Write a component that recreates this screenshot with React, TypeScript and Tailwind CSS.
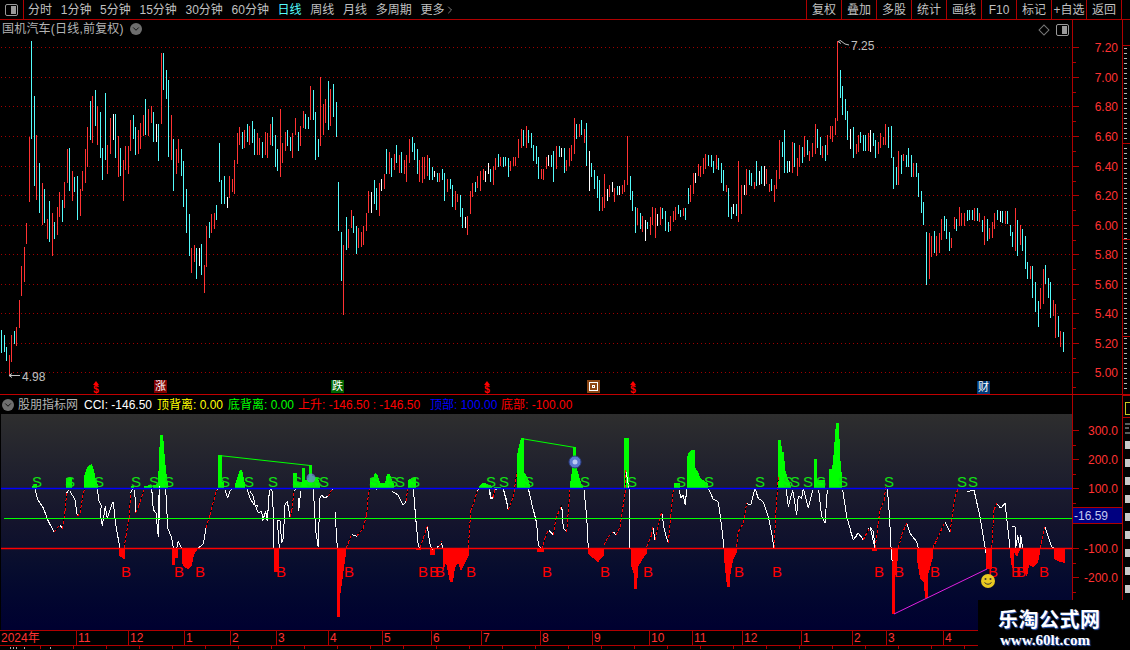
import { ChevronDown, ChevronRight } from "lucide-react";

type Pt = [number, number, number?];

const fontStack = "font-['Liberation_Sans','Noto_Sans_CJK_SC',sans-serif]";

// bars were read off 3x crops: "x top bottom colour", in crop coordinates
const barCrops: { ox: number; rows: string }[] = [
  {
    ox: 0,
    rows: "3 870 938 c,12 885 935 c,18 920 962 c,28 945 1005 r,33 885 965 r,42 873 912 c,48 862 917 r,57 780 863 r,64 678 767 r,72 621 725 r,79 549 611 r,87 290 485 r,94 3 298 c,102 168 437 c,109 286 479 r,117 369 518 c,126 429 554 r,132 447 548 c,141 537 597 r,147 484 605 c,156 519 647 r,163 546 597 c,171 501 585 r,178 457 530 r,186 480 545 c,193 426 503 r,201 327 428 r,207 324 452 c,216 393 483 r,222 411 456 c,232 408 539 c,240 447 527 r,247 393 452 r,255 327 429 r,262 261 380 r,270 183 300 c,277 168 308 r,285 150 258 c,292 198 315 r,301 216 354 c,307 324 419 c,315 159 360 c,322 315 401 r,331 234 341 r,339 222 300 w,346 222 354 c,354 288 410 r,361 323 408 c,370 360 482 r,376 318 390 r,385 318 401 r,391 239 333 r,400 225 297 c,406 261 344 c,415 270 342 r,421 249 327 r,430 225 289 r,435 177 285 c,444 207 288 r,453 198 249 r,460 216 306 c,468 252 306 w,475 252 362 c,484 39 252 r,490 39 150 c,499 90 177 c,505 120 351 c,514 225 360 r,520 297 452 c,529 327 402 r,535 297 369 r,544 327 408 c,550 363 500 c,558 447 578 c,568 522 647 c,574 624 698 r,583 615 666 r,589 624 716 c,598 624 678 w,604 612 704 c,613 675 758 r,619 558 680 r,628 546 593 c,634 522 578 r,643 519 567 r,649 495 540 c,658 309 425 c,664 420 491 c,673 408 493 c,682 471 503 w,688 408 474 r,697 417 455 r,703 360 461 r,712 279 372 r,718 261 315 r,727 276 327 c,733 270 324 r,742 252 306 c,748 258 315 r,757 243 309 c,763 267 345 c,772 279 345 r,778 294 345 r,787 306 354 c,796 276 345 r,802 279 354 r,811 252 315 r,817 231 318 c,826 285 381 c,832 327 393 c,841 207 411 r,847 309 369 r,856 276 333 r,862 270 318 c,871 291 333 c,877 279 354 r,886 234 285 r,895 276 333 c,901 258 318 r,910 213 264 r,916 222 267 c,925 231 267 c,931 138 240 r,940 150 240 c,946 216 360 c,955 297 351 c,961 111 318 r,970 192 285 r,976 177 249 r,985 123 270 c,991 147 259 r,1000 132 231 c,1009 186 291 c,1015 426 573 c,1024 576 723 c,1030 615 825 r,1039 531 630 c,1045 567 625 r",
  },
  {
    ox: 350,
    rows: "3 510 564 r,9 528 579 c,18 558 641 c,24 564 624 r,33 576 621 r,39 558 615 r,48 519 573 r,54 453 519 r,63 456 519 w,72 420 492 c,78 444 510 c,87 429 528 r,94 417 453 w,102 402 447 r,109 327 402 c,117 336 402 r,124 354 411 c,132 342 390 r,138 315 369 c,147 345 399 r,153 336 399 c,162 360 402 r,168 345 426 r,178 297 369 r,186 291 336 c,192 309 360 c,201 327 402 c,207 360 426 r,216 351 429 r,222 351 417 r,231 345 408 r,237 354 420 c,246 381 420 c,252 393 411 w,261 399 426 c,267 399 426 r,276 387 420 c,282 399 483 c,291 417 456 r,300 417 447 c,306 435 501 c,315 453 510 r,321 462 486 r,330 465 531 c,336 504 564 c,345 531 564 w,351 528 585 r,360 453 522 r,366 429 471 r,375 426 456 c,381 408 444 r,390 393 453 r,399 387 420 r,405 393 426 w,414 369 402 w,420 387 426 c,429 378 435 r,435 354 390 r,444 342 381 c,450 351 378 r,459 351 381 c,465 351 378 c,474 354 411 c,480 363 393 r,489 351 378 r,495 351 378 r,504 297 354 r,513 267 324 r,519 270 318 c,528 258 324 r,534 270 309 c,543 279 324 c,549 315 363 c,558 318 372 c,564 351 417 c,573 387 417 r,579 387 420 r,588 351 387 r,594 345 378 w,603 345 381 c,609 333 426 c,618 318 387 r,627 318 351 c,633 324 351 w,642 324 399 c,648 360 393 r,657 324 378 r,663 315 363 r,672 234 342 r,678 252 297 c,687 252 291 r,693 240 285 c,702 267 309 r,708 249 378 c,717 333 453 w,723 369 411 c,732 390 447 c,741 408 474 c,747 420 513 c,756 471 513 r,762 402 504 r,771 447 483 w,777 435 471 r,786 426 456 w,792 444 486 r,801 438 465 c,807 438 465 w,816 435 462 r,822 420 456 r,831 288 435 r,840 408 480 c,846 453 513 c,855 501 579 c,861 504 555 r,870 519 567 c,876 528 576 r,885 540 603 w,891 546 567 c,900 531 585 r,906 501 555 r,915 504 594 r,921 522 558 w,930 501 555 r,936 504 537 c,945 513 573 c,954 546 576 c,960 528 573 r,969 513 546 r,975 501 540 r,984 495 522 c,990 510 531 c,999 504 528 r,1005 504 540 c,1014 444 492 c,1020 435 486 r,1029 399 462 r,1035 399 429 w,1044 372 408 r",
  },
  {
    ox: 700,
    rows: "2 378 411 r,10 354 402 r,17 342 387 r,25 345 378 c,33 345 381 c,40 363 399 c,48 345 387 r,54 354 390 c,63 369 429 c,70 390 453 c,78 435 456 r,85 444 531 c,93 501 537 c,100 492 522 w,108 492 528 c,115 363 545 r,123 435 522 r,132 435 465 w,138 387 465 r,147 390 435 c,153 399 438 c,162 426 447 r,168 363 438 c,177 393 435 w,185 378 432 c,192 378 438 w,198 387 432 r,208 432 456 r,214 417 453 c,222 435 486 r,229 390 447 r,237 300 417 r,246 306 351 c,252 270 399 c,262 363 399 c,268 363 396 w,277 306 399 r,283 309 381 c,292 354 408 r,298 315 381 r,307 321 369 c,313 288 351 r,322 300 345 c,328 333 363 r,337 309 351 r,346 252 342 r,352 267 324 c,361 291 345 c,367 318 354 r,376 315 363 c,382 285 345 r,391 258 297 r,397 258 306 r,406 234 285 r,412 3 243 r,421 90 174 c,427 138 225 c,436 177 240 c,442 213 300 c,451 267 327 w,460 261 354 c,469 312 342 r,474 285 336 r,481 276 309 c,490 285 333 c,496 285 333 c,505 279 333 r,511 270 336 w,520 279 318 c,526 300 354 c,535 306 342 r,541 279 324 r,550 291 315 r,556 252 315 r,565 261 324 c,574 258 354 c,580 351 447 c,589 381 435 c,595 333 435 r,604 345 402 c,610 342 363 r,619 345 381 c,625 324 381 c,634 345 411 c,640 369 411 r,649 369 411 c,655 399 471 c,664 453 519 c,670 486 555 c,679 576 735 c,688 579 717 r,694 588 651 r,703 573 639 c,709 588 648 r,718 579 639 r,724 537 600 r,733 528 573 c,739 537 597 c,748 576 633 c,754 594 624 r,763 531 567 r,769 537 573 c,778 501 558 r,784 519 558 r,793 519 558 r,802 510 543 c,808 510 540 c,817 510 540 c,823 504 543 r,832 504 543 c,838 519 546 r,847 540 576 c,853 528 615 r,862 537 603 c,868 564 597 r,877 546 594 r,883 519 567 r,892 510 540 c,901 513 546 w,907 513 549 c,916 513 552 r,922 513 552 c,931 555 588 c,937 576 621 c,946 504 633 r,952 540 648 c,961 555 615 r,967 567 633 c,976 588 687 c,982 666 717 c,991 678 717 r,997 678 774 c,1006 726 816 c,1015 783 861 c,1021 744 807 r,1030 687 792 r,1036 675 732 c,1045 714 774 c,1051 726 834 c,1060 780 828 r,1066 792 894 r,1075 828 891 c,1081 873 921 r,1090 876 936 c",
  },
];

function barPaths() {
  const out: Record<string, string> = { r: "", c: "", w: "" };
  barCrops.forEach((crop) => {
    crop.rows.split(",").forEach((row) => {
      const [x, top, bottom, colour] = row.split(" ");
      const px = Math.floor(crop.ox + Number(x) / 3) + 0.5;
      const y1 = Math.round(40 + Number(top) / 3);
      const y2 = Math.round(40 + Number(bottom) / 3);
      out[colour] += `M${px} ${y1}V${y2}`;
    });
  });
  return out;
}

const gridYs = [47, 77, 106, 136, 166, 195, 225, 254, 284, 313, 343, 372];
const priceLabels = ["7.20", "7.00", "6.80", "6.60", "6.40", "6.20", "6.00", "5.80", "5.60", "5.40", "5.20", "5.00"];

// green and red humps of the CCI pane, as page coordinates of their outline
const greenAreas: Pt[][] = [
  [[32, 486], [35, 484], [37, 484]],
  [[66, 478], [72, 478]],
  [[84, 477], [87, 468], [89, 465], [92, 464], [94, 470], [96, 480], [98, 485]],
  [[131, 486], [134, 486]],
  [[144, 486], [152, 485]],
  [[153, 485], [158, 484], [160, 435], [163, 435], [165, 460], [166, 470], [168, 485]],
  [[218, 455], [222, 455], [222, 482], [224, 482]],
  [[235, 484], [238, 476], [240, 470], [242, 470], [245, 484]],
  [[293, 473], [297, 473], [297, 482], [302, 482], [302, 468], [305, 468], [305, 480], [309, 480], [309, 465], [312, 465], [312, 476], [318, 478], [320, 486]],
  [[370, 478], [373, 478], [375, 473], [378, 476], [380, 483], [385, 483], [387, 474], [390, 474], [392, 480], [394, 484]],
  [[408, 480], [412, 478], [416, 478]],
  [[479, 486], [482, 483], [485, 483], [489, 485], [492, 486]],
  [[494, 487], [501, 487]],
  [[517, 455], [519, 446], [521, 438], [524, 438], [524, 472], [528, 478], [530, 486]],
  [[570, 485], [572, 470], [573, 447], [576, 447], [576, 467], [578, 472], [580, 480], [583, 487]],
  [[624, 438], [629, 438]],
  [[674, 483], [680, 483]],
  [[687, 457], [689, 452], [692, 450], [695, 450], [695, 467], [698, 472], [701, 479], [708, 483]],
  [[778, 440], [781, 440], [782, 452], [784, 452], [785, 470], [788, 478], [791, 487]],
  [[814, 459], [817, 459], [817, 480], [825, 480]],
  [[829, 469], [832, 469], [833, 462], [836, 423], [839, 423], [840, 455], [842, 477]],
];

const redAreas: Pt[][] = [
  [[119, 556], [121, 557], [123, 559], [125, 559]],
  [[172, 565], [175, 565], [175, 558], [178, 558]],
  [[182, 563], [185, 568], [188, 569], [192, 565], [194, 555], [197, 550]],
  [[274, 572], [279, 572]],
  [[337, 617], [340, 617], [340, 597], [343, 575], [346, 553]],
  [[416, 550], [421, 550]],
  [[430, 555], [435, 555]],
  [[443, 572], [446, 563], [450, 582], [453, 582], [455, 568], [458, 563], [461, 571], [465, 563], [469, 555]],
  [[537, 552], [544, 552]],
  [[588, 554], [593, 558], [598, 563], [601, 558], [604, 556]],
  [[631, 565], [634, 575], [634, 589], [637, 589], [638, 567], [642, 560], [647, 553]],
  [[724, 558], [727, 587], [730, 587], [730, 577], [733, 560], [737, 552]],
  [[872, 551], [877, 551]],
  [[892, 614], [895, 614], [895, 577], [897, 570], [898, 553]],
  [[917, 560], [920, 578], [924, 583], [925, 598], [928, 598], [928, 575], [933, 557]],
  [[986, 569], [992, 569]],
  [[1010, 555], [1012, 568], [1014, 568], [1014, 552], [1017, 557], [1020, 550]],
  [[1023, 570], [1027, 577], [1029, 565], [1033, 567], [1038, 563], [1040, 552]],
  [[1054, 559], [1060, 562], [1065, 563]],
];

// CCI trace, each chunk in crop coordinates; a third value marks a rising, dashed leg
const cciCrops: { ox: number; oy: number; chunks: Pt[][] }[] = [
  {
    ox: 0,
    oy: 478,
    chunks: [
      [[105, 31], [112, 62], [130, 90], [145, 130], [163, 163], [180, 140, 1], [187, 152], [195, 100, 1], [200, 45, 1], [207, 35]],
      [[210, 40], [225, 65], [232, 115], [240, 105, 1], [250, 45, 1], [255, 31, 1]],
      [[292, 31], [297, 70], [305, 85], [300, 100], [307, 143], [316, 85], [322, 122], [335, 80], [340, 72], [347, 140], [357, 195], [360, 210]],
      [[372, 210], [378, 175, 1], [387, 120, 1], [392, 45, 1], [398, 31]],
      [[404, 35], [407, 105], [416, 85, 1], [432, 35, 1]],
      [[455, 31], [460, 95], [468, 105], [475, 178], [475, 120], [478, 25]],
      [[478, 25], [478, 125]],
      [[497, 31], [503, 150], [515, 180], [520, 210]],
      [[530, 210], [535, 190], [545, 210]],
      [[595, 210], [610, 198], [618, 150], [630, 110, 1], [650, 35, 1], [655, 31]],
      [[675, 35], [683, 60], [690, 38], [700, 31]],
      [[740, 31], [750, 60], [762, 80], [775, 85]],
    ],
  },
  {
    ox: 250,
    oy: 478,
    chunks: [
      [[0, 40], [10, 55], [15, 80], [25, 105], [35, 100], [38, 128], [47, 100], [52, 130], [58, 40], [62, 31], [68, 45], [72, 210]],
      [[88, 210], [82, 128], [90, 128], [95, 195], [100, 180], [105, 80], [112, 70], [120, 118], [125, 100, 1], [132, 40, 1], [138, 31]],
      [[145, 60], [146, 98], [152, 40]],
      [[190, 31], [197, 160], [205, 208], [208, 100], [210, 60], [215, 50], [222, 60], [235, 55], [245, 35, 1], [250, 31]],
      [[255, 100], [262, 210]],
      [[288, 210], [295, 195, 1], [305, 170, 1], [320, 175], [340, 150, 1], [350, 110, 1], [355, 50, 1], [360, 31, 1]],
      [[380, 36], [380, 31]],
      [[425, 40], [443, 50], [460, 82], [468, 70], [473, 31, 1]],
      [[490, 31], [497, 120], [505, 205], [510, 210], [520, 180, 1], [532, 145, 1], [537, 180], [542, 208], [550, 215]],
      [[560, 208], [568, 205], [575, 190, 1], [577, 210]],
      [[655, 210], [662, 100, 1], [672, 72, 1], [682, 38, 1], [690, 31]],
      [[717, 35], [722, 62], [730, 60], [735, 35, 1]],
      [[760, 31], [775, 95]],
    ],
  },
  {
    ox: 480,
    oy: 410,
    chunks: [
      [[28, 235], [33, 265], [38, 260], [45, 238, 1], [68, 235], [78, 265], [85, 300], [100, 260, 1], [110, 190, 1]],
      [[145, 235], [155, 280], [170, 340], [175, 405], [185, 418], [195, 385, 1], [205, 360, 1], [220, 375], [228, 325, 1], [245, 285, 1], [250, 355], [260, 365], [270, 240, 1]],
      [[312, 240], [320, 320], [325, 415]],
      [[372, 405], [385, 380, 1], [400, 365, 1], [408, 375], [420, 350, 1], [435, 250, 1], [437, 180, 1], [447, 235], [450, 415]],
      [[500, 410], [515, 375, 1], [518, 350, 1], [525, 390], [545, 305, 1], [553, 360], [565, 400], [572, 320, 1], [580, 240, 1]],
      [[598, 240], [602, 265], [610, 255], [616, 285], [620, 235]],
      [[685, 235], [700, 268], [715, 275], [725, 350], [732, 415]],
      [[770, 410], [775, 365, 1], [790, 340, 1], [800, 280, 1], [812, 285], [825, 235], [835, 265], [850, 275], [865, 320], [875, 370], [882, 415], [888, 300, 1], [895, 200, 1]],
      [[918, 235], [925, 290], [938, 240], [950, 315], [955, 258], [965, 265], [970, 235], [985, 295], [998, 240]],
      [[1016, 240], [1025, 320], [1035, 340], [1042, 240]],
      [[1088, 240], [1100, 320], [1120, 390], [1135, 368], [1150, 390], [1170, 350, 1], [1180, 365], [1185, 410]],
    ],
  },
  {
    ox: 850,
    oy: 480,
    chunks: [
      [[0, 150], [10, 180], [25, 160], [40, 178], [60, 140], [75, 205], [90, 90, 1], [103, 60, 1], [107, 20, 1]],
      [[112, 25], [118, 100], [125, 240], [130, 240]],
      [[145, 205], [155, 165, 1], [170, 130, 1], [180, 160], [200, 185], [205, 205]],
      [[248, 205], [260, 180, 1], [285, 125, 1], [300, 155], [315, 50, 1], [325, 25, 1]],
      [[350, 35], [372, 30], [390, 110], [405, 200], [408, 220]],
      [[425, 205], [432, 90, 1], [440, 70, 1], [452, 85], [465, 70], [472, 130], [480, 205]],
      [[487, 140], [495, 140], [497, 205], [503, 165], [510, 205], [512, 165], [518, 205]],
      [[570, 205], [585, 140, 1], [605, 200], [612, 205]],
    ],
  },
];

function cciPaths() {
  let white = "";
  let rising = "";
  cciCrops.forEach(({ ox, oy, chunks }) => {
    chunks.forEach((chunk) => {
      chunk.forEach((p, i) => {
        if (i === 0) return;
        const a = chunk[i - 1];
        const leg = `M${(ox + a[0] / 3).toFixed(1)} ${(oy + a[1] / 3).toFixed(1)}L${(ox + p[0] / 3).toFixed(1)} ${(oy + p[1] / 3).toFixed(1)}`;
        if (p[2]) rising += leg;
        else white += leg;
      });
    });
  });
  return { white, rising };
}

const areaPath = (pts: Pt[], base: number) =>
  `M${pts[0][0]} ${base}` + pts.map((p) => `L${p[0]} ${p[1]}`).join("") + `L${pts[pts.length - 1][0]} ${base}Z`;

const sXs = [37, 70, 99, 136, 154, 169, 225, 249, 273, 297, 311, 316, 324, 374, 393, 400, 415, 491, 504, 529, 585, 632, 681, 709, 760, 788, 795, 808, 821, 843, 889, 962, 973];
const bXs = [126, 179, 200, 281, 349, 423, 434, 440, 471, 547, 605, 648, 739, 777, 879, 899, 935, 993, 1016, 1021, 1044];

const tabs = ["分时", "1分钟", "5分钟", "15分钟", "30分钟", "60分钟", "日线", "周线", "月线", "多周期"];
const tools = ["复权", "叠加", "多股", "统计", "画线", "F10", "标记", "+自选", "返回"];

const months: [string, number][] = [
  ["2024年", 77], ["11", 52], ["12", 56], ["1", 46], ["2", 46], ["3", 52], ["4", 54], ["5", 49], ["6", 50],
  ["7", 59], ["8", 52], ["9", 57], ["10", 43], ["11", 50], ["12", 59], ["1", 51], ["2", 34], ["3", 57], ["4", 90],
];

function PanelIcon() {
  return (
    <span className="flex h-[12px] w-[13px] justify-end rounded-[2px] border border-[#9a9a9a] p-[1px]">
      <span className="h-full w-[5px] bg-[#9a9a9a]" />
    </span>
  );
}

function RoundToggle() {
  return (
    <span className="flex h-[12px] w-[12px] items-center justify-center rounded-full bg-[#6e6e6e] text-black">
      <ChevronDown size={10} strokeWidth={2} />
    </span>
  );
}

function PriceChart() {
  const bars = barPaths();
  return (
    <svg className="block" width={1072} height={374} viewBox="0 20 1072 374">
      {gridYs.map((y) => (
        <line key={y} x1={1} x2={1072} y1={y + 0.5} y2={y + 0.5} stroke="#a00000" strokeDasharray="1 3" />
      ))}
      <g shapeRendering="crispEdges" fill="none">
        <path d={bars.r} stroke="#ff3232" />
        <path d={bars.c} stroke="#54fcfc" />
        <path d={bars.w} stroke="#ffffff" />
      </g>
      {/* extreme price flags */}
      <g fill="none" stroke="#c0c0c0">
        <path d="M9 375.5H20M9 375.5l3-2M9 375.5l3 2" />
        <path d="M838 41.5l3-1M838 41.5l3 2M841 41l4 3 4 1" />
      </g>
      <g fill="#c0c0c0" fontSize={12}>
        <text x={22} y={381}>4.98</text>
        <text x={851} y={50}>7.25</text>
      </g>
      {/* $ signals */}
      {[96, 487, 633].map((x) => (
        <g key={x} fill="#ff0000">
          <path d={`M${x - 3} 385L${x} 381L${x + 3} 385Z`} />
          <text x={x} y={393} fontSize={10} fontWeight={700} textAnchor="middle">$</text>
        </g>
      ))}
    </svg>
  );
}

function SignalBox({ text, colour }: { text: string; colour: string }) {
  return (
    <span className={`flex h-[13px] w-[13px] items-center justify-center text-[11px] leading-none text-white ${colour}`}>{text}</span>
  );
}

function CciChart() {
  const { white, rising } = cciPaths();
  return (
    <svg className="block" width={1071} height={216} viewBox="1 414 1071 216">
      <g shapeRendering="crispEdges">
        {greenAreas.map((a, i) => (
          <path key={i} d={areaPath(a, 488)} fill="#00ff00" />
        ))}
        {redAreas.map((a, i) => (
          <path key={i} d={areaPath(a, 549)} fill="#ff0000" />
        ))}
      </g>
      <g shapeRendering="crispEdges">
        <path d={white} fill="none" stroke="#ffffff" />
        <path d={rising} fill="none" stroke="#000000" />
        <path d={rising} fill="none" stroke="#ff0000" strokeDasharray="3 2" />
      </g>
      <path d="M1 488.5H1072" stroke="#0000ff" strokeWidth={1.4} />
      <path d="M4 518.5H1072" stroke="#00ff00" strokeWidth={1.2} />
      <path d="M1 548.5H1072" stroke="#ff0000" strokeWidth={1.4} />
      <path d="M219 455.5L310 465.5M521 438.5L575 447.5" stroke="#00ff00" fill="none" />
      <path d="M894 614L987 569" stroke="#e020e0" fill="none" />
      <g fontSize={15} fill="#12e012" textAnchor="middle">
        {sXs.map((x) => (
          <text key={x} x={x} y={487}>S</text>
        ))}
      </g>
      <g fontSize={15} fill="#ff0000" textAnchor="middle">
        {bXs.map((x) => (
          <text key={x} x={x} y={577}>B</text>
        ))}
      </g>
      {/* alert balls */}
      <circle cx={311} cy={478} r={4.5} fill="#6f86d8" opacity={0.75} />
      <circle cx={575} cy={462} r={6} fill="#5d78d0" stroke="#2c3f86" />
      <circle cx={575} cy={462} r={2.5} fill="#b9c8f2" />
      {/* smiley */}
      <circle cx={988} cy={581} r={7} fill="#e8c820" />
      <circle cx={985.5} cy={579} r={1} fill="#333" />
      <circle cx={990.5} cy={579} r={1} fill="#333" />
      <path d="M984.5 582.5q3.5 3.5 7 0" fill="none" stroke="#333" />
    </svg>
  );
}

function PriceAxis() {
  return (
    <svg className="block" width={50} height={374} viewBox="1073 20 50 374">
      {gridYs.map((y, i) => (
        <g key={y}>
          <path d={`M1073 ${y + 0.5}H1079`} stroke="#b00000" />
          <path d={`M1073 ${y + 15.5}H1076`} stroke="#b00000" />
          <text x={1118} y={y + 5} fontSize={12} fill="#ff3232" textAnchor="end">{priceLabels[i]}</text>
        </g>
      ))}
    </svg>
  );
}

function CciAxis() {
  const rows: [string, number][] = [["300.0", 430], ["200.0", 459], ["100.0", 488], ["-100.0", 548], ["-200.0", 577]];
  return (
    <svg className="block" width={50} height={235} viewBox="1073 395 50 235">
      {rows.map(([label, y]) => (
        <g key={label}>
          <path d={`M1073 ${y + 0.5}H1079`} stroke="#b00000" />
          <path d={`M1073 ${y + 15.5}H1076`} stroke="#b00000" />
          <text x={1118} y={y + 5} fontSize={12} fill="#ff3232" textAnchor="end">{label}</text>
        </g>
      ))}
    </svg>
  );
}

// clipped rows of a side list: only the left edge of its text shows
function SideStrip() {
  const rows: string[] = [];
  for (let y = 48; y < 392; y += 5) {
    rows.push(`M1 ${y}h${2 + ((y * 7) % 5)}`);
  }
  const blocks: string[] = [];
  for (let y = 441; y < 600; y += 18) {
    blocks.push(`M2 ${y}h5v8h-5z`);
  }
  return (
    <svg className="block" width={7} height={630} viewBox="0 20 7 630">
      <path d={rows.join("")} stroke="#b8b8b8" fill="none" shapeRendering="crispEdges" />
      <path d={blocks.join("")} fill="#c8c8c8" />
      <path d="M0 45.5H7M0 143.5H7M0 239.5H7M0 336.5H7M0 395.5H7M0 417.5H7" stroke="#b00000" />
      <rect x={2.5} y={402.5} width={6} height={12} fill="none" stroke="#c8c820" />
      <path d="M2 424h5M2 428h4M2 433h5" stroke="#b8b8b8" />
    </svg>
  );
}

// the tops of the next row's ticks, cut off by the window
function TickStubs() {
  const ticks: string[] = [];
  for (let x = 40; x < 980; x += 33) {
    ticks.push(`M${x + 0.5} 0V3`);
  }
  return (
    <svg className="block" width={1123} height={3} viewBox="0 0 1123 3">
      <path d={ticks.join("")} stroke="#b00000" shapeRendering="crispEdges" />
      <path d="M10.5 1V3M13.5 1V3M16.5 1V3M24.5 1V3M50.5 1V3" stroke="#a8a8a8" shapeRendering="crispEdges" />
    </svg>
  );
}

export default function App() {
  return (
    <div className={`relative flex h-[650px] w-[1130px] flex-col overflow-hidden bg-black text-[12px] leading-none text-[#c0c0c0] ${fontStack}`}>
      {/* Top toolbar */}
      <div className="flex h-[20px] shrink-0 items-stretch border-b border-[#b00000]">
        <div className="flex w-[24px] items-center justify-center border-r border-[#b00000]">
          <PanelIcon />
        </div>
        <div className="flex flex-1 items-center gap-[8.7px] pl-[4px]">
          {tabs.map((t) => (
            <span key={t} className={t === "日线" ? "text-[#54fcfc]" : ""}>{t}</span>
          ))}
          <span className="flex items-center gap-0 text-[#c0c0c0]">
            更多
            <ChevronRight size={12} strokeWidth={1.3} />
          </span>
        </div>
        <div className="mr-[8px] flex border-r border-[#b00000]">
          {tools.map((t) => (
            <span key={t} className="flex w-[35px] items-center justify-center border-l border-[#b00000]">{t}</span>
          ))}
        </div>
      </div>

      {/* Price row */}
      <div className="flex h-[374px] shrink-0">
        <div className="relative w-[1072px]">
          <PriceChart />
          <div className="absolute left-[2px] top-[3px] flex items-center gap-[6px] text-[#b4b4b4]">
            <span className="tracking-[0.2px]">国机汽车(日线,前复权)</span>
            <RoundToggle />
          </div>
          <div className="absolute right-[3px] top-[4px] flex items-center gap-[8px]">
            <span className="h-[8px] w-[8px] rotate-45 border border-[#777]" />
            <PanelIcon />
          </div>
          <div className="absolute left-[154px] top-[360px]"><SignalBox text="涨" colour="bg-[#800000]" /></div>
          <div className="absolute left-[331px] top-[360px]"><SignalBox text="跌" colour="bg-[#006400]" /></div>
          <div className="absolute left-[587px] top-[360px]">
            <span className="flex h-[13px] w-[13px] items-center justify-center bg-[#8b4513]">
              <span className="flex h-[9px] w-[9px] items-center justify-center border border-white">
                <span className="h-[3px] w-[3px] border border-white" />
              </span>
            </span>
          </div>
          <div className="absolute left-[977px] top-[361px]"><SignalBox text="财" colour="bg-[#003a78]" /></div>
        </div>
        <div className="w-[51px] border-l border-[#b00000]">
          <PriceAxis />
        </div>
      </div>

      {/* CCI row */}
      <div className="flex h-[236px] shrink-0 border-t border-[#c00000]">
        <div className="flex w-[1072px] flex-col">
          <div className="flex h-[19px] shrink-0 items-center pl-[2px]">
            <RoundToggle />
            <span className="ml-[4px] w-[66px] text-[#b4b4b4]">股朋指标网</span>
            <span className="w-[73px] text-white">CCI: -146.50</span>
            <span className="w-[71px] text-[#ffff00]">顶背离: 0.00</span>
            <span className="w-[70px] text-[#00ff00]">底背离: 0.00</span>
            <span className="w-[132px] text-[#ff0000]">上升: -146.50 : -146.50</span>
            <span className="w-[71px] text-[#0000ff]">顶部: 100.00</span>
            <span className="text-[#ff0000]">底部: -100.00</span>
          </div>
          <div className="ml-[1px] h-[216px] bg-linear-to-b from-[#2e2e2e] via-[#14142c] to-[#000030]">
            <CciChart />
          </div>
        </div>
        <div className="relative w-[51px] border-l border-[#b00000]">
          <CciAxis />
          <div className="absolute inset-x-0 top-[112px] flex h-[17px] items-center border-y border-[#b00000] bg-[#000080] pl-[1px] text-[#c4c8f0]">-16.59</div>
        </div>
      </div>

      {/* Time axis */}
      <div className="w-[1123px] flex-1 border-t border-[#b00000]">
        <div className="flex h-[15px] border-b border-[#b00000] text-[#ff3232]">
          {months.map(([label, w], i) => (
            <span key={i} className="flex items-center border-r border-[#b00000] pl-[1px]" style={{ width: w }}>{label}</span>
          ))}
        </div>
        <TickStubs />
      </div>

      {/* Side strip */}
      <div className="absolute right-0 top-[20px] border-l border-[#b00000]">
        <SideStrip />
      </div>

      {/* Watermark */}
      <div className="absolute bottom-0 right-0 flex h-[50px] w-[152px] flex-col items-start justify-start bg-black pl-[20px] pt-[9px] font-bold text-white">
        <span className="text-[20px] leading-[22px] tracking-[0.5px] [text-shadow:1px_1px_1px_#2f5fc0]">乐淘公式网</span>
        <span className="ml-[2px] mt-[1px] font-['Liberation_Serif',serif] text-[15px] leading-[16px] [text-shadow:1px_1px_1px_#2f5fc0]">www.60lt.com</span>
      </div>
    </div>
  );
}
